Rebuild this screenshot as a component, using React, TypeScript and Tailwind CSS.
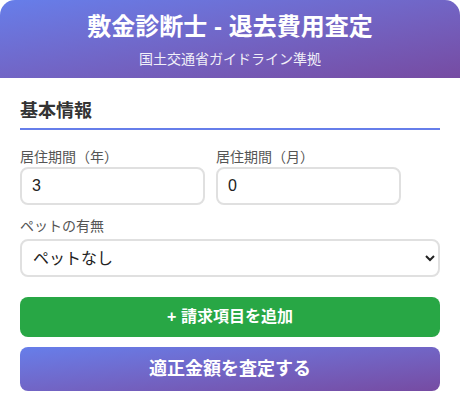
import { useState } from 'react';

export default function App() {
	const [years, setYears] = useState('3');
	const [months, setMonths] = useState('0');
	const [pet, setPet] = useState('none');

	return (
		<div
			className="w-[460px] h-[411px] bg-white"
			style={{ fontFamily: '"Liberation Sans", "Noto Sans CJK JP", sans-serif' }}
		>
			{/* Header */}
			<div className="h-[78px] rounded-t-[15px] bg-gradient-to-br from-[#667eea] to-[#764ba2] text-white text-center pt-[12px]">
				<h1 className="text-[24px] font-bold leading-[30px]">敷金診断士 - 退去費用査定</h1>
				<p className="text-[14px] leading-[20px] mt-[7px] opacity-90">国土交通省ガイドライン準拠</p>
			</div>

			<div className="px-5 pt-5">
				{/* Basic info */}
				<h2 className="text-[18px] font-bold leading-[27px] text-[#333] pb-[3px] border-b-2 border-[#667eea] mb-[19px]">
					基本情報
				</h2>

				<div className="grid grid-cols-[185px_185px] gap-[11px]">
					<div>
						<label className="block text-[14px] leading-[17px] text-[#555] mb-px">居住期間（年）</label>
						<input
							type="number"
							value={years}
							onChange={e => setYears(e.target.value)}
							className="w-full h-[38px] px-[10px] border-2 border-[#e0e0e0] rounded-lg text-[16px] text-[#222] outline-none"
						/>
					</div>
					<div>
						<label className="block text-[14px] leading-[17px] text-[#555] mb-px">居住期間（月）</label>
						<input
							type="number"
							value={months}
							onChange={e => setMonths(e.target.value)}
							className="w-full h-[38px] px-[10px] border-2 border-[#e0e0e0] rounded-lg text-[16px] text-[#222] outline-none"
						/>
					</div>
				</div>

				<div className="mt-[13px]">
					<label className="block text-[14px] leading-[17px] text-[#555] mb-[4px]">ペットの有無</label>
					<select
						value={pet}
						onChange={e => setPet(e.target.value)}
						className="w-full h-[38px] pl-[7px] pr-[6px] border-2 border-[#e0e0e0] rounded-lg text-[16px] text-[#222] bg-white outline-none"
					>
						<option value="none">ペットなし</option>
						<option value="dog">犬</option>
						<option value="cat">猫</option>
					</select>
				</div>

				<button className="mt-5 w-full h-[40px] rounded-lg bg-[#28a745] text-white text-[16px] font-bold">
					+ 請求項目を追加
				</button>

				<button className="mt-[10px] w-full h-[44px] rounded-lg bg-gradient-to-br from-[#667eea] to-[#764ba2] text-white text-[18px] font-bold">
					適正金額を査定する
				</button>
			</div>
		</div>
	);
}
